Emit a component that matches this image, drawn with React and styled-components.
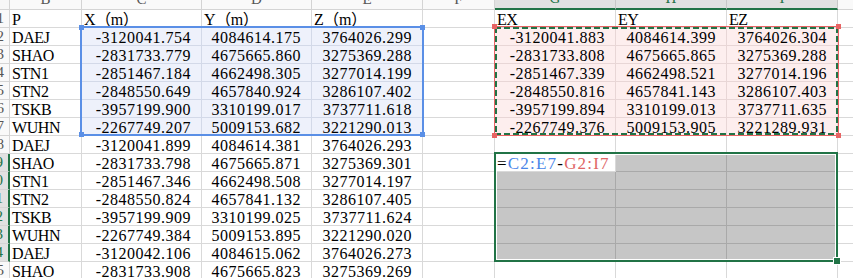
import styled, { createGlobalStyle, css } from "styled-components";

const columns = ["B", "C", "D", "E", "F", "G", "H", "I", "J"];

const names = ["DAEJ", "SHAO", "STN1", "STN2", "TSKB", "WUHN", "DAEJ", "SHAO", "STN1", "STN2", "TSKB", "WUHN", "DAEJ", "SHAO"];

const xyz = [
  ["-3120041.754", "4084614.175", "3764026.299"],
  ["-2831733.779", "4675665.860", "3275369.288"],
  ["-2851467.184", "4662498.305", "3277014.199"],
  ["-2848550.649", "4657840.924", "3286107.402"],
  ["-3957199.900", "3310199.017", "3737711.618"],
  ["-2267749.207", "5009153.682", "3221290.013"],
  ["-3120041.899", "4084614.381", "3764026.293"],
  ["-2831733.798", "4675665.871", "3275369.301"],
  ["-2851467.346", "4662498.508", "3277014.197"],
  ["-2848550.824", "4657841.132", "3286107.405"],
  ["-3957199.909", "3310199.025", "3737711.624"],
  ["-2267749.384", "5009153.895", "3221290.020"],
  ["-3120042.106", "4084615.062", "3764026.273"],
  ["-2831733.908", "4675665.823", "3275369.269"],
];

const exyz = [
  ["-3120041.883", "4084614.399", "3764026.304"],
  ["-2831733.808", "4675665.865", "3275369.288"],
  ["-2851467.339", "4662498.521", "3277014.196"],
  ["-2848550.816", "4657841.143", "3286107.403"],
  ["-3957199.894", "3310199.013", "3737711.635"],
  ["-2267749.376", "5009153.905", "3221289.931"],
];

// what sits in each sheet row, B..J
function rowValues(r) {
  if (r === 1) return ["P", "X（m）", "Y（m）", "Z（m）", "", "EX", "EY", "EZ", ""];
  const err = r <= 7 ? exyz[r - 2] : ["", "", ""];
  return [names[r - 2], ...xyz[r - 2], "", ...err, ""];
}

function toneOf(r, c) {
  if (r >= 2 && r <= 7 && c >= 1 && c <= 3) return "blue";
  if (r >= 2 && r <= 7 && c >= 5 && c <= 7) return "pink";
  if (r >= 9 && r <= 14 && c >= 5 && c <= 7 && !(r === 9 && c === 5)) return "gray";
  return "plain";
}

export default function App() {
  const rows = Array.from({ length: 15 }, (_, i) => i + 1);
  return (
    <>
      <GlobalStyle />
      <Viewport>
        <Layers>
          <Sheet>
            <Corner />
            {columns.map((c) => (
              <ColHead key={c} $active={["G", "H", "I"].includes(c)}>{c}</ColHead>
            ))}
            {rows.map((r) => [
              <RowHead key={`h${r}`} $active={r >= 9 && r <= 14}>{r}</RowHead>,
              ...rowValues(r).map((v, c) => {
                if (r === 9 && c === 5) {
                  return (
                    <Cell key={`${r}-${c}`} $tone="plain">
                      <Formula>
                        =<Ref $color="#4a86e8">C2:E7</Ref>-<Ref $color="#e06666">G2:I7</Ref>
                      </Formula>
                    </Cell>
                  );
                }
                return (
                  <Cell key={`${r}-${c}`} $tone={toneOf(r, c)} $right={r > 1 && c > 0}>
                    {v}
                  </Cell>
                );
              }),
            ])}
          </Sheet>

          <Marks>
            <BlueFrame>
              <Knob $c="#5a8fe6" $y="top" $x="left" />
              <Knob $c="#5a8fe6" $y="top" $x="right" />
              <Knob $c="#5a8fe6" $y="bottom" $x="left" />
              <Knob $c="#5a8fe6" $y="bottom" $x="right" />
            </BlueFrame>
            <CopyFrame>
              <Knob $c="#e86464" $y="top" $x="left" />
              <Knob $c="#e86464" $y="top" $x="right" />
              <Knob $c="#e86464" $y="bottom" $x="left" />
              <Knob $c="#e86464" $y="bottom" $x="right" />
            </CopyFrame>
            <PickFrame>
              <Handle />
            </PickFrame>
          </Marks>
        </Layers>
      </Viewport>
    </>
  );
}

const GlobalStyle = createGlobalStyle`
  body {
    margin: 0;
    background: #ffffff;
    overflow: hidden;
  }
`;

const Viewport = styled.div`
  width: 853px;
  height: 278px;
  overflow: hidden;
  background: #ffffff;
`;

const Layers = styled.div`
  display: grid;
  margin: -12px 0 0 -20px;
`;

const track = css`
  grid-area: 1 / 1;
  display: grid;
  grid-template-columns: 30px 72px 120px 110px 111px 72px 121px 111px 111px 100px;
  grid-template-rows: 22px repeat(15, 18px);
`;

const Sheet = styled.div`
  ${track}
  font-family: "Liberation Serif", "Noto Sans CJK SC", serif;
  font-size: 16px;
  color: #000000;
`;

const Marks = styled.div`
  ${track}
  z-index: 2;
  pointer-events: none;
`;

const Corner = styled.div`
  background: #f7f7f7;
  border-right: 1px solid #d4d4d4;
  border-bottom: 1px solid #d4d4d4;
`;

const ColHead = styled.div`
  box-sizing: border-box;
  display: flex;
  align-items: flex-end;
  justify-content: center;
  padding-bottom: 3px;
  font-size: 15px;
  line-height: 14px;
  color: ${(p) => (p.$active ? "#217346" : "#555555")};
  background: ${(p) => (p.$active ? "#e1e1e1" : "#f9f9f9")};
  border-right: 1px solid ${(p) => (p.$active ? "#c8c8c8" : "#d4d4d4")};
  border-bottom: ${(p) => (p.$active ? "2px solid #217346" : "1px solid #d4d4d4")};
`;

const RowHead = styled.div`
  box-sizing: border-box;
  display: flex;
  align-items: center;
  justify-content: flex-end;
  padding-right: 5px;
  font-size: 15px;
  color: ${(p) => (p.$active ? "#217346" : "#555555")};
  background: ${(p) => (p.$active ? "#e1e1e1" : "#f9f9f9")};
  border-right: ${(p) => (p.$active ? "2px solid #217346" : "1px solid #d4d4d4")};
  border-bottom: 1px solid #d4d4d4;
`;

const tones = {
  plain: { bg: "#ffffff", line: "#d9d9d9" },
  blue: { bg: "#eef1fb", line: "#d3d9e8" },
  pink: { bg: "#fdeeee", line: "#e8d6d6" },
  gray: { bg: "#c6c6c6", line: "#a9a9a9" },
};

const Cell = styled.div`
  box-sizing: border-box;
  padding: 2px ${(p) => (p.$right ? "10px" : "0")} 0 ${(p) => (p.$right ? "0" : "2px")};
  line-height: 16px;
  letter-spacing: ${(p) => (p.$right ? "0.5px" : "-0.4px")};
  white-space: nowrap;
  overflow: hidden;
  text-align: ${(p) => (p.$right ? "right" : "left")};
  background: ${(p) => tones[p.$tone].bg};
  border-right: 1px solid ${(p) => tones[p.$tone].line};
  border-bottom: 1px solid ${(p) => tones[p.$tone].line};
`;

const Formula = styled.span`
  font-family: "Liberation Serif", serif;
  font-size: 17px;
  letter-spacing: 1.2px;
`;

const Ref = styled.span`
  color: ${(p) => p.$color};
`;

const BlueFrame = styled.div`
  grid-area: 3 / 3 / 9 / 6;
  position: relative;
  margin: -2px -1px 0 -2px;
  border: 2px solid #5a8fe6;
`;

const CopyFrame = styled.div`
  grid-area: 3 / 7 / 9 / 10;
  position: relative;
  margin: -2px -1px 0 -1px;
  border: 1px solid #e86464;

  &::before {
    content: "";
    position: absolute;
    inset: 0;
    background:
      repeating-linear-gradient(90deg, #217346 0 6px, transparent 6px 9px) top / 100% 2px no-repeat,
      repeating-linear-gradient(90deg, #217346 0 6px, transparent 6px 9px) bottom / 100% 2px no-repeat,
      repeating-linear-gradient(180deg, #217346 0 6px, transparent 6px 9px) left / 2px 100% no-repeat,
      repeating-linear-gradient(180deg, #217346 0 6px, transparent 6px 9px) right / 2px 100% no-repeat;
  }
`;

// small square sitting on a corner of a range frame
const Knob = styled.span`
  position: absolute;
  width: 5px;
  height: 5px;
  background: ${(p) => p.$c};
  ${(p) => p.$y}: -3px;
  ${(p) => p.$x}: -3px;
`;

const PickFrame = styled.div`
  grid-area: 10 / 7 / 16 / 10;
  position: relative;
  margin: -2px 0 0 -1px;
  border: 2px solid #217346;
  box-shadow: inset 0 0 0 1px #ffffff;
`;

const Handle = styled.span`
  position: absolute;
  right: -5px;
  bottom: -5px;
  width: 6px;
  height: 6px;
  background: #217346;
  border: 1px solid #ffffff;
`;
